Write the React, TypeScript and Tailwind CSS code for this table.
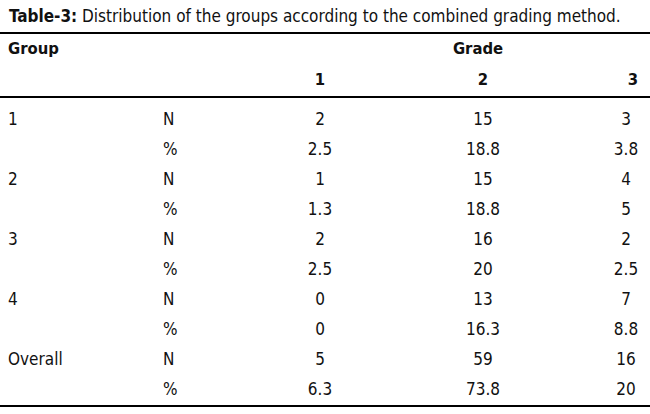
const rows: { group: string; stat: string; g1: string; g2: string; g3: string }[] = [
  { group: '1', stat: 'N', g1: '2', g2: '15', g3: '3' },
  { group: '', stat: '%', g1: '2.5', g2: '18.8', g3: '3.8' },
  { group: '2', stat: 'N', g1: '1', g2: '15', g3: '4' },
  { group: '', stat: '%', g1: '1.3', g2: '18.8', g3: '5' },
  { group: '3', stat: 'N', g1: '2', g2: '16', g3: '2' },
  { group: '', stat: '%', g1: '2.5', g2: '20', g3: '2.5' },
  { group: '4', stat: 'N', g1: '0', g2: '13', g3: '7' },
  { group: '', stat: '%', g1: '0', g2: '16.3', g3: '8.8' },
  { group: 'Overall', stat: 'N', g1: '5', g2: '59', g3: '16' },
  { group: '', stat: '%', g1: '6.3', g2: '73.8', g3: '20' },
];

const cols = 'grid grid-cols-[163px_87px_140px_186px_74px]';

export default function App() {
  return (
    <div
      className="w-[650px] h-[414px] bg-white text-[#111] overflow-hidden font-stretch-condensed"
      style={{ fontFamily: '"DejaVu Sans Condensed", "DejaVu Sans", sans-serif' }}
    >
      <div className="h-[32px] pl-[9px] text-[17px] leading-[32px] whitespace-nowrap">
        <span className="font-bold">Table-3:</span> Distribution of the groups according to the combined grading method.
      </div>

      <div className="border-t-2 border-black">
        <div className={`${cols} h-[31px] items-center text-[16.5px] font-bold`}>
          <div className="pl-[8px]">Group</div>
          <div />
          <div />
          <div className="pr-[10px] text-center">Grade</div>
          <div />
        </div>
        <div className={`${cols} h-[31px] items-center text-[16.5px] font-bold`}>
          <div />
          <div />
          <div className="text-center">1</div>
          <div className="text-center">2</div>
          <div className="pl-[40px] text-center">3</div>
        </div>
      </div>

      <div className="border-t-2 border-black pt-[7px]">
        {rows.map((r, i) => (
          <div key={i} className={`${cols} h-[30px] items-center text-[17px]`}>
            <div className="pl-[8px]">{r.group}</div>
            <div>{r.stat}</div>
            <div className="text-center">{r.g1}</div>
            <div className="text-center">{r.g2}</div>
            <div className="pl-[26px] text-center">{r.g3}</div>
          </div>
        ))}
      </div>

      <div className="border-t-2 border-black" />
    </div>
  );
}
